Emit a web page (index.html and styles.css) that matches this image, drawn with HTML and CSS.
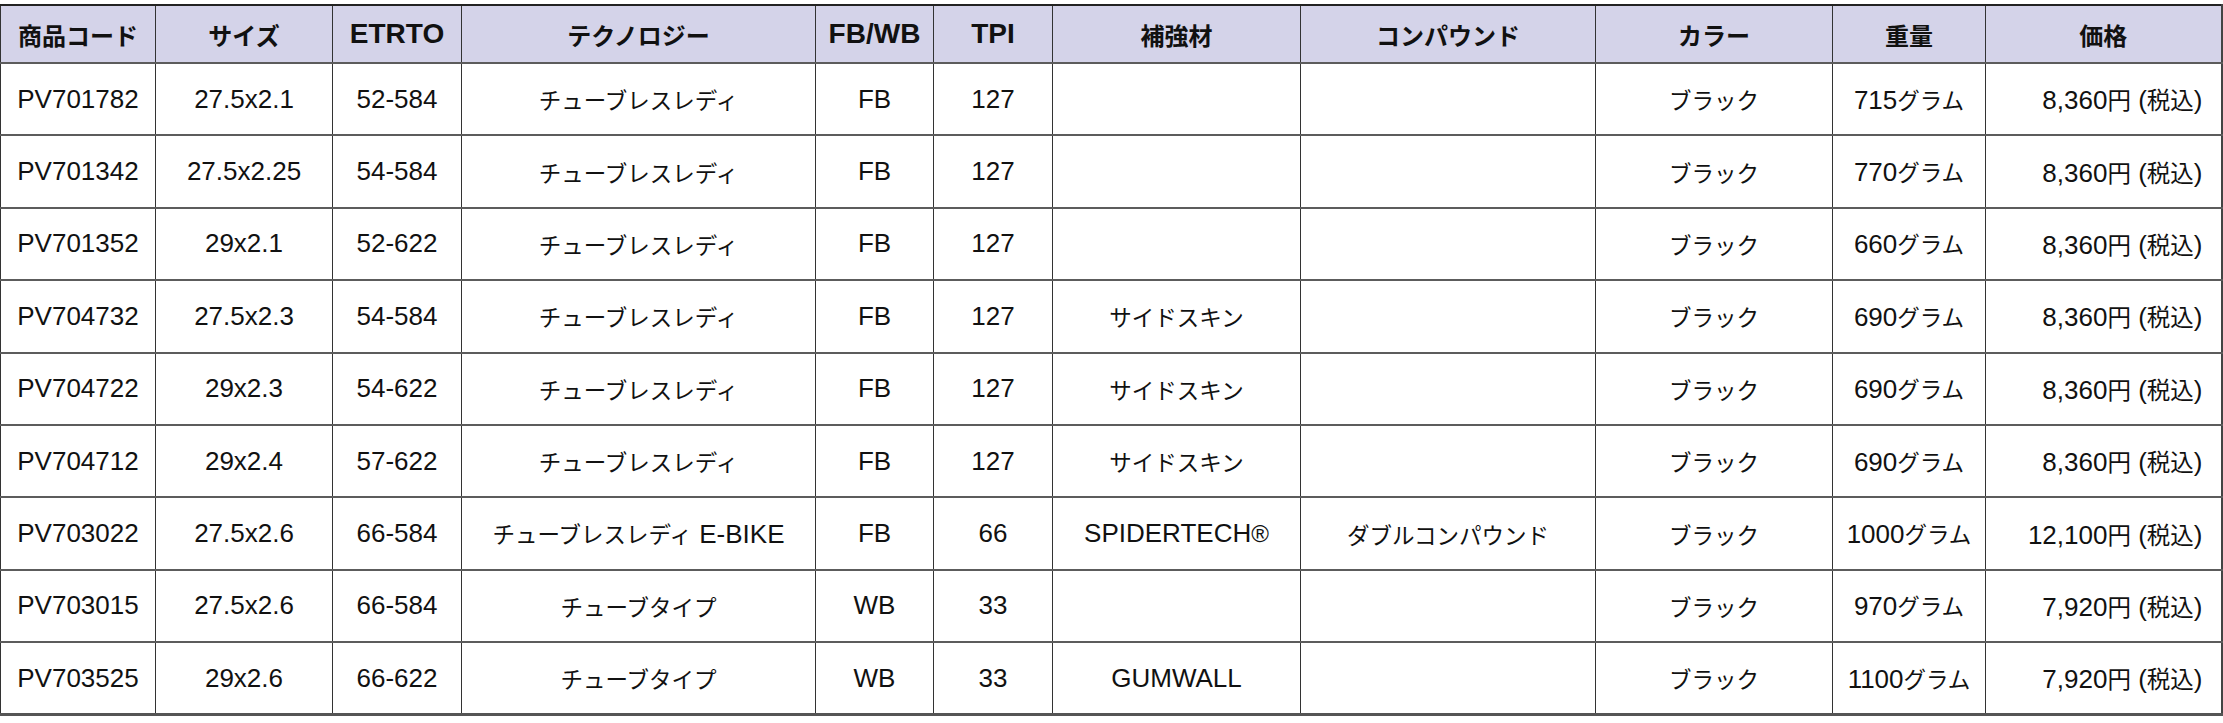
FILE: index.html
```html
<!DOCTYPE html>
<html lang="ja">
<head>
<meta charset="utf-8">
<title>タイヤ仕様</title>
<link rel="stylesheet" href="styles.css">
</head>
<body>
<table class="spec">
  <colgroup>
    <col class="c1"><col class="c2"><col class="c3"><col class="c4"><col class="c5"><col class="c6"><col class="c7"><col class="c8"><col class="c9"><col class="c10"><col class="c11">
  </colgroup>
  <thead>
    <tr class="head">
      <th>商品コード</th><th>サイズ</th><th class="en">ETRTO</th><th>テクノロジー</th><th class="en">FB/WB</th><th class="en">TPI</th><th>補強材</th><th>コンパウンド</th><th>カラー</th><th>重量</th><th>価格</th>
    </tr>
  </thead>
  <tbody>
    <tr><td>PV701782</td><td>27.5x2.1</td><td>52-584</td><td class="jp">チューブレスレディ</td><td>FB</td><td>127</td><td></td><td></td><td class="jp">ブラック</td><td>715<span class="jp">グラム</span></td><td class="price">8,360<span class="jp">円</span> (<span class="jp">税込</span>)</td></tr>
    <tr><td>PV701342</td><td>27.5x2.25</td><td>54-584</td><td class="jp">チューブレスレディ</td><td>FB</td><td>127</td><td></td><td></td><td class="jp">ブラック</td><td>770<span class="jp">グラム</span></td><td class="price">8,360<span class="jp">円</span> (<span class="jp">税込</span>)</td></tr>
    <tr><td>PV701352</td><td>29x2.1</td><td>52-622</td><td class="jp">チューブレスレディ</td><td>FB</td><td>127</td><td></td><td></td><td class="jp">ブラック</td><td>660<span class="jp">グラム</span></td><td class="price">8,360<span class="jp">円</span> (<span class="jp">税込</span>)</td></tr>
    <tr><td>PV704732</td><td>27.5x2.3</td><td>54-584</td><td class="jp">チューブレスレディ</td><td>FB</td><td>127</td><td class="jp">サイドスキン</td><td></td><td class="jp">ブラック</td><td>690<span class="jp">グラム</span></td><td class="price">8,360<span class="jp">円</span> (<span class="jp">税込</span>)</td></tr>
    <tr><td>PV704722</td><td>29x2.3</td><td>54-622</td><td class="jp">チューブレスレディ</td><td>FB</td><td>127</td><td class="jp">サイドスキン</td><td></td><td class="jp">ブラック</td><td>690<span class="jp">グラム</span></td><td class="price">8,360<span class="jp">円</span> (<span class="jp">税込</span>)</td></tr>
    <tr><td>PV704712</td><td>29x2.4</td><td>57-622</td><td class="jp">チューブレスレディ</td><td>FB</td><td>127</td><td class="jp">サイドスキン</td><td></td><td class="jp">ブラック</td><td>690<span class="jp">グラム</span></td><td class="price">8,360<span class="jp">円</span> (<span class="jp">税込</span>)</td></tr>
    <tr><td>PV703022</td><td>27.5x2.6</td><td>66-584</td><td><span class="jp">チューブレスレディ</span> E-BIKE</td><td>FB</td><td>66</td><td>SPIDERTECH<span class="mark">®</span></td><td class="jp">ダブルコンパウンド</td><td class="jp">ブラック</td><td>1000<span class="jp">グラム</span></td><td class="price">12,100<span class="jp">円</span> (<span class="jp">税込</span>)</td></tr>
    <tr><td>PV703015</td><td>27.5x2.6</td><td>66-584</td><td class="jp">チューブタイプ</td><td>WB</td><td>33</td><td></td><td></td><td class="jp">ブラック</td><td>970<span class="jp">グラム</span></td><td class="price">7,920<span class="jp">円</span> (<span class="jp">税込</span>)</td></tr>
    <tr><td>PV703525</td><td>29x2.6</td><td>66-622</td><td class="jp">チューブタイプ</td><td>WB</td><td>33</td><td>GUMWALL</td><td></td><td class="jp">ブラック</td><td>1100<span class="jp">グラム</span></td><td class="price">7,920<span class="jp">円</span> (<span class="jp">税込</span>)</td></tr>
  </tbody>
</table>
</body>
</html>
```

FILE: styles.css
```css
html, body {
  margin: 0;
  padding: 0;
  background: #ffffff;
}

body {
  padding-top: 4px;
}

.spec {
  width: 2222px;
  table-layout: fixed;
  border-collapse: collapse;
  font-family: "Liberation Sans", "Noto Sans CJK JP", sans-serif;
  color: #111111;
  border-top: 2px solid #222222;
  border-bottom: 3px solid #555555;
  border-left: 1px solid #333333;
  border-right: 2px solid #444444;
}

.c1 { width: 155px; }
.c2 { width: 177px; }
.c3 { width: 129px; }
.c4 { width: 354px; }
.c5 { width: 118px; }
.c6 { width: 119px; }
.c7 { width: 248px; }
.c8 { width: 295px; }
.c9 { width: 237px; }
.c10 { width: 153px; }
.c11 { width: 236px; }

.spec th,
.spec td {
  padding: 0;
  text-align: center;
  vertical-align: middle;
  white-space: nowrap;
  border-left: 1px solid #333333;
  border-right: 1px solid #333333;
}

.spec tr {
  border-bottom: 2px solid #5c5c5c;
}

.head {
  height: 58px;
  background: #d4d3e9;
}

.head th {
  font-family: "Noto Sans CJK JP", "Liberation Sans", sans-serif;
  font-size: 24px;
  font-weight: 700;
  color: #111111;
}

.head th.en {
  font-family: "Liberation Sans", "Noto Sans CJK JP", sans-serif;
  font-size: 28px;
}

.spec tbody tr {
  height: 72.4px;
}

.spec td {
  font-size: 26px;
}

.spec td.jp,
.spec td .jp {
  font-family: "Noto Sans CJK JP", "Liberation Sans", sans-serif;
  font-size: 22.5px;
}

.spec td.price {
  text-align: right;
  padding-right: 18px;
}

.spec td.price .jp {
  font-size: 23.5px;
}

.mark {
  font-size: 24px;
}
```
